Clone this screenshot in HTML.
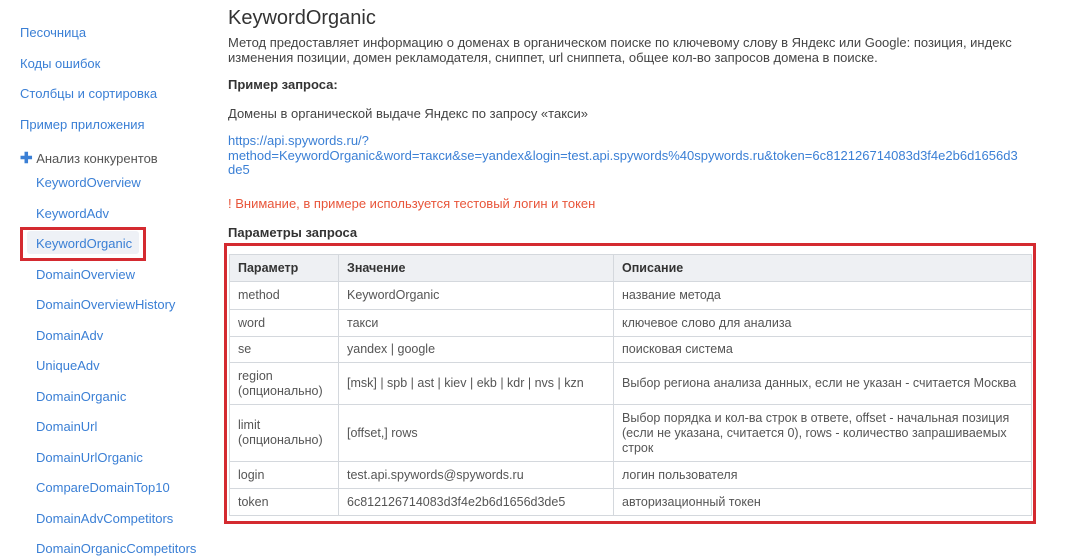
<!DOCTYPE html><html><head><meta charset="utf-8"><style>
body{margin:0;width:1079px;height:559px;overflow:hidden;background:#fff;font-family:"Liberation Sans",sans-serif;font-size:13px;color:#444;position:relative}
.a{position:absolute;white-space:nowrap}
.l{color:#3a7fd5}
.s{left:20px}.ss{left:36px}
table{position:absolute;left:229px;top:254px;width:803px;border-collapse:collapse;font-size:12.5px;color:#555}
td,th{border:1px solid #d4d8dd;padding:0 8px;text-align:left;vertical-align:middle;line-height:15px}
th{background:#eef0f3;color:#333;font-weight:bold;height:26px}
</style></head><body>
<div class="a l s" style="top:25px">Песочница</div>
<div class="a l s" style="top:56px">Коды ошибок</div>
<div class="a l s" style="top:86px">Столбцы и сортировка</div>
<div class="a l s" style="top:117px">Пример приложения</div>
<div class="a s" style="top:149px;color:#555"><span style="color:#3a7fd5;font-weight:bold;font-size:15px">✚</span> Анализ конкурентов</div>
<div class="a l ss" style="top:175px">KeywordOverview</div>
<div class="a l ss" style="top:206px">KeywordAdv</div>
<div class="a" style="left:20px;top:227px;width:120px;height:28px;border:3px solid #d42a30"></div>
<div class="a" style="left:27px;top:231px;width:112px;height:23px;background:#eef1f6;border-radius:3px"></div>
<div class="a l ss" style="top:236px">KeywordOrganic</div>
<div class="a l ss" style="top:267px">DomainOverview</div>
<div class="a l ss" style="top:297px">DomainOverviewHistory</div>
<div class="a l ss" style="top:328px">DomainAdv</div>
<div class="a l ss" style="top:358px">UniqueAdv</div>
<div class="a l ss" style="top:389px">DomainOrganic</div>
<div class="a l ss" style="top:419px">DomainUrl</div>
<div class="a l ss" style="top:450px">DomainUrlOrganic</div>
<div class="a l ss" style="top:480px">CompareDomainTop10</div>
<div class="a l ss" style="top:511px">DomainAdvCompetitors</div>
<div class="a l ss" style="top:541px">DomainOrganicCompetitors</div>

<div class="a" style="left:228px;top:7px;font-size:20px;color:#333">KeywordOrganic</div>
<div class="a" style="left:228px;top:35px;line-height:15px">Метод предоставляет информацию о доменах в органическом поиске по ключевому слову в Яндекс или Google: позиция, индекс<br>изменения позиции, домен рекламодателя, сниппет, url сниппета, общее кол-во запросов домена в поиске.</div>
<div class="a" style="left:228px;top:77px;font-weight:bold;color:#333">Пример запроса:</div>
<div class="a" style="left:228px;top:106px">Домены в органической выдаче Яндекс по запросу «такси»</div>
<div class="a l" style="left:228px;top:134px;line-height:14.5px">https://api.spywords.ru/?<br>method=KeywordOrganic&amp;word=такси&amp;se=yandex&amp;login=test.api.spywords%40spywords.ru&amp;token=6c812126714083d3f4e2b6d1656d3<br>de5</div>
<div class="a" style="left:228px;top:196px;color:#e8553a">! Внимание, в примере используется тестовый логин и токен</div>
<div class="a" style="left:228px;top:225px;font-weight:bold;color:#333">Параметры запроса</div>
<div class="a" style="left:224px;top:243px;width:806px;height:275px;border:3px solid #d42a30"></div>
<table>
<col style="width:109px"><col style="width:275px"><col>
<tr><th>Параметр</th><th>Значение</th><th>Описание</th></tr>
<tr style="height:28px"><td>method</td><td>KeywordOrganic</td><td>название метода</td></tr>
<tr style="height:27px"><td>word</td><td>такси</td><td>ключевое слово для анализа</td></tr>
<tr style="height:26px"><td>se</td><td>yandex | google</td><td>поисковая система</td></tr>
<tr style="height:42px"><td>region<br>(опционально)</td><td>[msk] | spb | ast | kiev | ekb | kdr | nvs | kzn</td><td>Выбор региона анализа данных, если не указан - считается Москва</td></tr>
<tr style="height:57px"><td>limit<br>(опционально)</td><td>[offset,] rows</td><td>Выбор порядка и кол-ва строк в ответе, offset - начальная позиция<br>(если не указана, считается 0), rows - количество запрашиваемых<br>строк</td></tr>
<tr style="height:27px"><td>login</td><td>test.api.spywords@spywords.ru</td><td>логин пользователя</td></tr>
<tr style="height:27px"><td>token</td><td>6c812126714083d3f4e2b6d1656d3de5</td><td>авторизационный токен</td></tr>
</table>
</body></html>
